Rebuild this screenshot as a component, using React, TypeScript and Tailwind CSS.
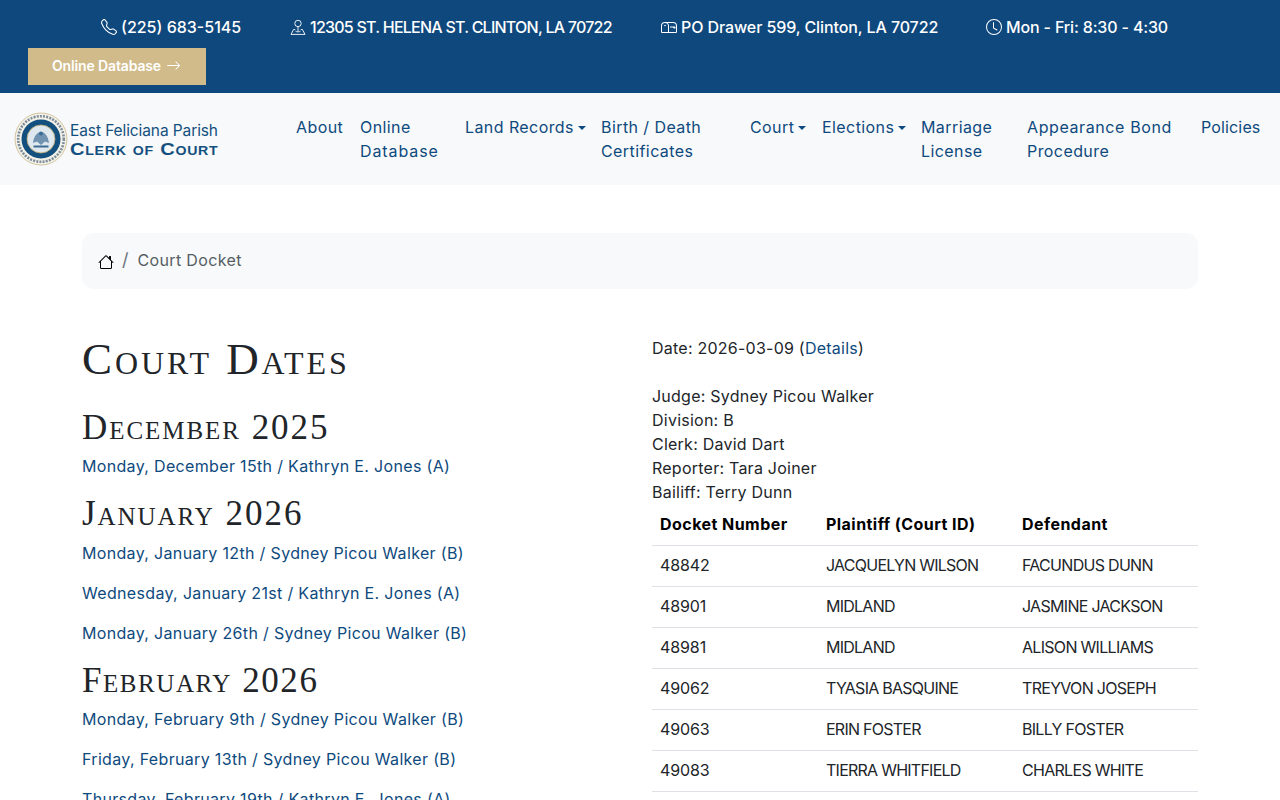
import { BsTelephone, BsMailbox, BsClock, BsHouse, BsArrowRight } from "react-icons/bs";

const sans = "font-['Inter','Liberation_Sans',sans-serif]";

function PinIcon() {
  return (
    <svg width="16" height="16" viewBox="0 0 16 16" fill="none" stroke="currentColor" strokeWidth="0.9" className="shrink-0">
      <circle cx="8" cy="4.5" r="3.2" />
      <path d="M8 7.7V12" />
      <path d="M5.2 10.5H3.6L1 15.4H15L12.4 10.5H10.8" />
      <path d="M5.5 12.2C6.5 13 9.5 13 10.5 12.2" />
    </svg>
  );
}

function Seal() {
  return (
    <svg width="54" height="54" viewBox="0 0 54 54" className="mt-[1px] shrink-0">
      <circle cx="27" cy="27" r="26" fill="#f3f1e8" stroke="#c9b98f" strokeWidth="0.8" />
      <circle cx="27" cy="27" r="22.8" fill="none" stroke="#7d8c99" strokeWidth="2.6" strokeDasharray="2 1.2" />
      <circle cx="27" cy="27" r="19.5" fill="#14507f" />
      <circle cx="27" cy="27" r="14" fill="#dfe8ee" stroke="#b9a56c" strokeWidth="0.8" />
      <path d="M19 31C20 24 23 20 27 20C31 20 34 24 35 31L31 29.5L27 33L23 29.5Z" fill="#6f93b0" />
      <circle cx="27" cy="21.5" r="2" fill="#3c6c92" />
      <path d="M19.5 34.5H34.5" stroke="#3c6c92" strokeWidth="2" />
    </svg>
  );
}

function Caret() {
  return <span className="ml-[4px] inline-block align-[3px] border-x-[4px] border-t-[4px] border-x-transparent border-t-current" />;
}

function NavItem({ children, className, caret }: { children: React.ReactNode; className: string; caret?: boolean }) {
  return (
    <a className={`block shrink-0 text-[#0e4a7e] tracking-[0.42px] leading-6 ${className}`}>
      {children}
      {caret && <Caret />}
    </a>
  );
}

function DateLink({ children }: { children: React.ReactNode }) {
  return <p className="mb-4 leading-6 text-[#0e4a7e] tracking-[0.33px] whitespace-nowrap">{children}</p>;
}

function Month({ children, className }: { children: React.ReactNode; className: string }) {
  return (
    <h2 className={`h-[38.4px] pt-[1px] font-['Liberation_Serif',serif] text-[35px] leading-[38.4px] text-[#212529] [font-variant:small-caps] whitespace-nowrap ${className}`}>
      {children}
    </h2>
  );
}

const rows = [
  ["48842", "JACQUELYN WILSON", "FACUNDUS DUNN"],
  ["48901", "MIDLAND", "JASMINE JACKSON"],
  ["48981", "MIDLAND", "ALISON WILLIAMS"],
  ["49062", "TYASIA BASQUINE", "TREYVON JOSEPH"],
  ["49063", "ERIN FOSTER", "BILLY FOSTER"],
  ["49083", "TIERRA WHITFIELD", "CHARLES WHITE"],
];

export default function App() {
  return (
    <div className={`h-[800px] overflow-hidden bg-white text-base text-[#212529] ${sans}`}>
      <div className="h-[93px] bg-[#0f487d] text-white">
        <div className="flex h-[55px] items-start gap-12 pl-[101px] pt-[15px] leading-6 font-medium whitespace-nowrap">
          <span className="flex w-[141px] items-center gap-1 tracking-[0px]"><BsTelephone size={16} className="shrink-0" />(225) 683-5145</span>
          <span className="flex w-[323px] items-center gap-1 tracking-[-0.75px]"><PinIcon />12305 ST. HELENA ST. CLINTON, LA 70722</span>
          <span className="flex w-[277px] items-center gap-1 tracking-[-0.1px]"><BsMailbox size={16} className="shrink-0" />PO Drawer 599, Clinton, LA 70722</span>
          <span className="flex items-center gap-1 tracking-[-0.15px]"><BsClock size={16} className="shrink-0" />Mon - Fri: 8:30 - 4:30</span>
        </div>
        <a className="ml-7 -mt-[7px] flex h-[37px] w-[178px] items-center gap-[5px] bg-[#d1bb8a] pb-[2px] pl-6 text-sm font-semibold tracking-[-0.14px]">
          Online Database <BsArrowRight size={15} />
        </a>
      </div>

      <nav className="flex h-[92px] bg-[#f8f9fa]">
        <div className="flex w-[296px] shrink-0 items-center gap-[2px] self-start pl-[14px] pt-[18px]">
          <Seal />
          <div className="text-[#14507f]">
            <div className="text-[15.5px] leading-[21px] tracking-[-0.1px] whitespace-nowrap">East Feliciana Parish</div>
            <div className="origin-left font-['Liberation_Sans',sans-serif] text-[17px] leading-[17px] font-bold [font-variant:small-caps] tracking-[0.6px] whitespace-nowrap [transform:scaleX(1.18)]">Clerk of Court</div>
          </div>
        </div>
        <div className="flex pt-[22px] whitespace-nowrap">
          <NavItem className="w-[64px]">About</NavItem>
          <NavItem className="w-[105px]">Online<br /><span className="tracking-[0.9px]">Database</span></NavItem>
          <NavItem className="w-[136px]" caret>Land Records</NavItem>
          <NavItem className="w-[149px]">Birth / Death<br />Certificates</NavItem>
          <NavItem className="w-[72px]" caret>Court</NavItem>
          <NavItem className="w-[99px]" caret>Elections</NavItem>
          <NavItem className="w-[106px]">Marriage<br />License</NavItem>
          <NavItem className="w-[174px]"><span className="tracking-[0.6px]">Appearance Bond</span><br />Procedure</NavItem>
          <NavItem className="w-[70px]"><span className="tracking-[0.15px]">Policies</span></NavItem>
        </div>
      </nav>

      <main className="mx-[82px] pt-12">
        <div className="flex h-14 items-center rounded-xl bg-[#f8f9fa] pl-[16px]">
          <BsHouse size={16} className="mt-[2px] text-black" />
          <span className="mb-[2px] ml-[8px] text-lg text-[#6c757d]">/</span>
          <span className="mb-[2px] ml-[9px] tracking-[0.35px] text-[#565e64]">Court Docket</span>
        </div>

        <div className="mt-[47px] flex">
          <div className="w-[570px] shrink-0">
            <h1 className="mb-[23.7px] h-12 font-['Liberation_Serif',serif] text-[45px] leading-[46px] text-[#212529] [font-variant:small-caps] tracking-[2.95px]">
              Court Dates
            </h1>
            <Month className="mb-2 tracking-[1.95px]">December 2025</Month>
            <DateLink>Monday, December 15th / Kathryn E. Jones (A)</DateLink>
            <Month className="mb-[8.6px] tracking-[1.95px]">January 2026</Month>
            <DateLink>Monday, January 12th / Sydney Picou Walker (B)</DateLink>
            <DateLink>Wednesday, January 21st / Kathryn E. Jones (A)</DateLink>
            <DateLink>Monday, January 26th / Sydney Picou Walker (B)</DateLink>
            <Month className="mb-[7.4px] tracking-[1.55px]">February 2026</Month>
            <DateLink>Monday, February 9th / Sydney Picou Walker (B)</DateLink>
            <DateLink>Friday, February 13th / Sydney Picou Walker (B)</DateLink>
            <DateLink>Thursday, February 19th / Kathryn E. Jones (A)</DateLink>
          </div>

          <div className="min-w-0 flex-1">
            <div className="leading-6 tracking-[0.24px]">
              <p>Date: 2026-03-09 (<a className="text-[#0e4a7e]">Details</a>)</p>
              <br />
              <p>Judge: Sydney Picou Walker</p>
              <p>Division: B</p>
              <p>Clerk: David Dart</p>
              <p>Reporter: Tara Joiner</p>
              <p>Bailiff: Terry Dunn</p>
            </div>
            <table className="w-full table-fixed border-collapse text-left">
              <thead>
                <tr className="border-b border-[#dee2e6] text-black tracking-[0.45px]">
                  <th className="w-[166px] px-2 pt-2 pb-[9px] font-bold">Docket Number</th>
                  <th className="w-[196px] px-2 pt-2 pb-[9px] font-bold">Plaintiff (Court ID)</th>
                  <th className="px-2 pt-2 pb-[9px] font-bold">Defendant</th>
                </tr>
              </thead>
              <tbody>
                {rows.map((r) => (
                  <tr key={r[0]} className="border-b border-[#dee2e6]">
                    <td className="px-2 pt-[7px] pb-[9px] tracking-[-0.1px]">{r[0]}</td>
                    <td className="px-2 pt-[7px] pb-[9px] tracking-[-0.75px] whitespace-nowrap">{r[1]}</td>
                    <td className="px-2 pt-[7px] pb-[9px] tracking-[-0.7px] whitespace-nowrap">{r[2]}</td>
                  </tr>
                ))}
              </tbody>
            </table>
          </div>
        </div>
      </main>
    </div>
  );
}
